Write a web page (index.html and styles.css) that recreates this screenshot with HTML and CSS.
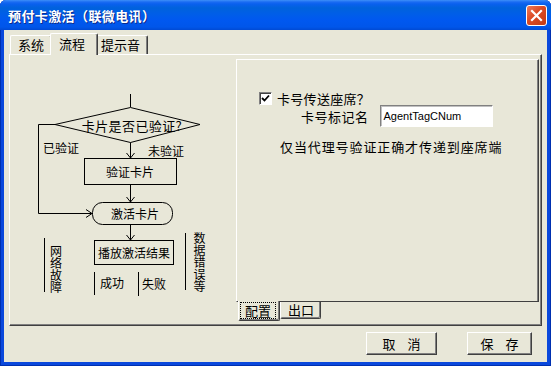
FILE: index.html
```html
<!DOCTYPE html>
<html lang="zh-CN">
<head>
    <meta charset="UTF-8">
    <meta name="viewport" content="width=device-width, initial-scale=1.0">
    <title>预付卡激活</title>
    <link rel="stylesheet" href="styles.css">
</head>
<body>
    <div class="window">
        <!-- Barra de título -->
        <div class="titlebar">
            <span class="title">预付卡激活（联微电讯）</span>
            <span class="close">
                <svg width="13" height="13" viewBox="0 0 13 13">
                    <path d="M2 2 L11 11 M11 2 L2 11" stroke="#fff" stroke-width="2.2" stroke-linecap="square"/>
                </svg>
            </span>
        </div>

        <div class="client">
            <!-- Pestañas superiores -->
            <div class="tabs">
                <div class="tab">系统</div>
                <div class="tab active">流程</div>
                <div class="tab">提示音</div>
            </div>

            <div class="panel">
                <!-- Diagrama del flujo -->
                <svg class="flow" width="226" height="270" viewBox="10 55 226 270">
                    <g class="lines">
                        <line x1="130.5" y1="94" x2="130.5" y2="107"/>
                        <polygon points="55,124.5 130.5,107.5 200,124.5 130.5,142.5"/>
                        <polyline points="55,124.5 38.5,124.5 38.5,213.5 92,213.5"/>
                        <polyline points="86,209.5 92,213.5 86,217.5"/>
                        <line x1="130.5" y1="142.5" x2="130.5" y2="158"/>
                        <polyline points="126.5,153 130.5,158 134.5,153"/>
                        <rect x="84.5" y="158.5" width="92" height="26"/>
                        <line x1="130.5" y1="184.5" x2="130.5" y2="202"/>
                        <polyline points="126.5,197 130.5,202 134.5,197"/>
                        <rect x="92.5" y="202.5" width="80" height="22" rx="10" ry="10"/>
                        <line x1="130.5" y1="224.5" x2="130.5" y2="240"/>
                        <polyline points="126.5,235 130.5,240 134.5,235"/>
                        <rect x="94.5" y="240.5" width="79" height="24"/>
                        <line x1="94.5" y1="272" x2="94.5" y2="295"/>
                        <line x1="138.5" y1="272" x2="138.5" y2="296"/>
                        <line x1="44.5" y1="238" x2="44.5" y2="292"/>
                        <line x1="185.5" y1="233" x2="185.5" y2="290"/>
                    </g>
                    <text class="ask" x="132" y="125" text-anchor="middle">卡片是否已验证?</text>
                    <text x="43" y="147">已验证</text>
                    <text x="148" y="150">未验证</text>
                    <text x="130" y="171" text-anchor="middle">验证卡片</text>
                    <text x="135" y="213" text-anchor="middle">激活卡片</text>
                    <text x="134" y="252" text-anchor="middle">播放激活结果</text>
                    <text x="100" y="282">成功</text>
                    <text x="142" y="283">失败</text>
                    <text class="vert" x="56" y="245">网络故障</text>
                    <text class="vert" x="199.5" y="232">数据错误等</text>
                </svg>

                <!-- Sub-panel con pestañas abajo -->
                <div class="sub">
                    <div class="page">
                        <div class="check-row">
                            <span class="checkbox">
                                <svg width="9" height="9" viewBox="0 0 9 9">
                                    <path d="M1 4 L3.5 6.5 L8 1.5" fill="none" stroke="#000" stroke-width="1.8"/>
                                </svg>
                            </span>
                            <span>卡号传送座席？</span>
                        </div>
                        <div class="field-row">
                            <span class="label">卡号标记名</span>
                            <span class="input">AgentTagCNum</span>
                        </div>
                        <p class="note">仅当代理号验证正确才传递到座席端</p>
                    </div>
                    <div class="subtabs">
                        <div class="subtab active"><span class="focus">配置</span></div>
                        <div class="subtab">出口</div>
                    </div>
                </div>
            </div>

            <!-- Botones -->
            <div class="buttons">
                <button class="btn cancel">取 消</button>
                <button class="btn save">保 存</button>
            </div>
        </div>
    </div>
</body>
</html>
```

FILE: styles.css
```css
/* Colores de la ventana */
:root {
    --face: #e8e7d8;
    --shadow: #808080;
    --dark: #404040;
    --light: #ffffff;
    --frame: #0a48dc;
}

body {
    margin: 0;
    padding: 0;
    font-family: "Noto Sans CJK SC", sans-serif;
    font-size: 13px;
    color: #000;
}

.window {
    width: 551px;
    height: 366px;
    box-sizing: border-box;
    display: flex;
    flex-direction: column;
    background: var(--frame);
    padding: 0 4px 4px 4px;
    border-radius: 6px 6px 0 0;
    overflow: hidden;
    box-shadow: inset 1px 0 #0030b0, inset -1px 0 #0030b0, inset 0 -1px #0030b0;
}

/* Barra de título */
.titlebar {
    height: 30px;
    margin: 0 -4px;
    padding: 0 4px 0 8px;
    display: flex;
    align-items: center;
    justify-content: space-between;
    background: linear-gradient(to bottom, #3d8ff8 0, #1a6cf2 2px, #0a60ee 4px, #0062dc 8px, #005ee8 14px, #0058f0 20px, #0056ea 27px, #004ad4 30px);
}

.title {
    color: #fff;
    font-weight: bold;
    font-size: 13px;
    text-shadow: 1px 1px #0b2b8c;
    letter-spacing: 0.4px;
    margin-top: 1px;
}

.close {
    width: 19px;
    height: 19px;
    margin-top: 1px;
    border: 1px solid #fff;
    border-radius: 3px;
    background: linear-gradient(135deg, #ee7a5a 0, #db4a24 45%, #c23a14 100%);
    display: flex;
    align-items: center;
    justify-content: center;
}

/* Área cliente */
.client {
    flex: 1;
    background: var(--face);
    padding: 3px 5px 7px 5px;
    display: flex;
    flex-direction: column;
}

.tabs {
    height: 21px;
    display: flex;
    align-items: flex-end;
    padding-left: 1px;
}

.tab {
    height: 19px;
    box-sizing: border-box;
    padding: 0 0 0 7px;
    line-height: 17px;
    border-left: 1px solid var(--light);
    border-top: 1px solid var(--light);
    border-right: 1px solid var(--dark);
    border-radius: 2px 2px 0 0;
    box-shadow: inset -1px 0 var(--shadow);
    background: var(--face);
}

.tab:nth-child(1) { width: 42px; }
.tab:nth-child(3) { width: 52px; padding-left: 4px; }

.tab.active {
    width: 48px;
    height: 22px;
    margin: 0 -2px -1px -2px;
    padding-left: 8px;
    line-height: 19px;
    position: relative;
    z-index: 1;
}

.panel {
    height: 272px;
    box-sizing: border-box;
    display: flex;
    border-left: 1px solid var(--light);
    border-top: 1px solid var(--light);
    border-right: 1px solid var(--dark);
    border-bottom: 1px solid var(--dark);
    box-shadow: inset -1px -1px var(--shadow);
}

/* Diagrama */
.flow {
    display: block;
    flex: none;
}

.flow .lines line,
.flow .lines polyline,
.flow .lines polygon,
.flow .lines rect {
    fill: none;
    stroke: #000;
    stroke-width: 1;
}

.flow text {
    font-family: "Noto Sans CJK SC", sans-serif;
    font-size: 12px;
    fill: #000;
    dominant-baseline: central;
}

.flow .ask {
    font-size: 13px;
    letter-spacing: 0.4px;
}

.flow .vert {
    writing-mode: vertical-rl;
    dominant-baseline: auto;
}

/* Sub-panel */
.sub {
    flex: 1;
    display: flex;
    flex-direction: column;
    padding: 4px 2px 4px 0;
}

.page {
    flex: 1;
    border-left: 1px solid var(--light);
    border-top: 1px solid var(--light);
    border-right: 1px solid var(--dark);
    border-bottom: 1px solid var(--dark);
    box-shadow: inset -1px 0 var(--shadow);
}

.check-row {
    display: flex;
    align-items: center;
    height: 13px;
    margin: 32px 0 0 22px;
    gap: 5px;
}

.checkbox {
    width: 13px;
    height: 13px;
    box-sizing: border-box;
    background: #fff;
    border: 1px solid;
    border-color: var(--shadow) var(--light) var(--light) var(--shadow);
    box-shadow: inset 1px 1px var(--dark);
    display: flex;
    align-items: center;
    justify-content: center;
}

.check-row span:last-child {
    letter-spacing: 0.3px;
}

.field-row {
    display: flex;
    align-items: center;
    height: 22px;
    margin-left: 64px;
    gap: 11px;
}

.label {
    letter-spacing: 0.5px;
}

.input {
    width: 113px;
    height: 22px;
    box-sizing: border-box;
    background: #fff;
    border: 1px solid;
    border-color: var(--shadow) var(--light) var(--light) var(--shadow);
    box-shadow: inset 1px 1px #c0c0c0;
    padding-left: 3px;
    font-family: "Liberation Sans", Arial, sans-serif;
    font-size: 11px;
    line-height: 20px;
}

.note {
    margin: 12px 0 0 43px;
    line-height: 16px;
    letter-spacing: 0.9px;
}

.subtabs {
    height: 19px;
    display: flex;
    align-items: flex-start;
    padding-left: 2px;
}

.subtab {
    height: 17px;
    box-sizing: border-box;
    width: 41px;
    padding-left: 7px;
    line-height: 15px;
    border-left: 1px solid var(--light);
    border-bottom: 1px solid var(--dark);
    border-right: 1px solid var(--dark);
    border-radius: 0 0 2px 2px;
    box-shadow: inset -1px -1px var(--shadow);
}

.subtab.active {
    width: 42px;
    height: 20px;
    margin-top: -1px;
    padding: 2px 0 0 2px;
    background: var(--face);
    position: relative;
    z-index: 1;
}

.focus {
    display: inline-block;
    padding: 0 4px;
    height: 15px;
    line-height: 15px;
    outline: 1px dotted #000;
}

/* Botones */
.buttons {
    margin-top: 6px;
    height: 23px;
    display: flex;
    justify-content: flex-end;
    gap: 30px;
    padding-right: 10px;
}

.btn {
    height: 23px;
    box-sizing: border-box;
    background: var(--face);
    border: 1px solid;
    border-color: var(--light) var(--dark) var(--dark) var(--light);
    box-shadow: inset -1px -1px var(--shadow);
    font-family: "Noto Sans CJK SC", sans-serif;
    font-size: 13px;
    word-spacing: 9px;
    padding: 0;
    color: #000;
}

.cancel { width: 71px; }
.save { width: 65px; }
```
